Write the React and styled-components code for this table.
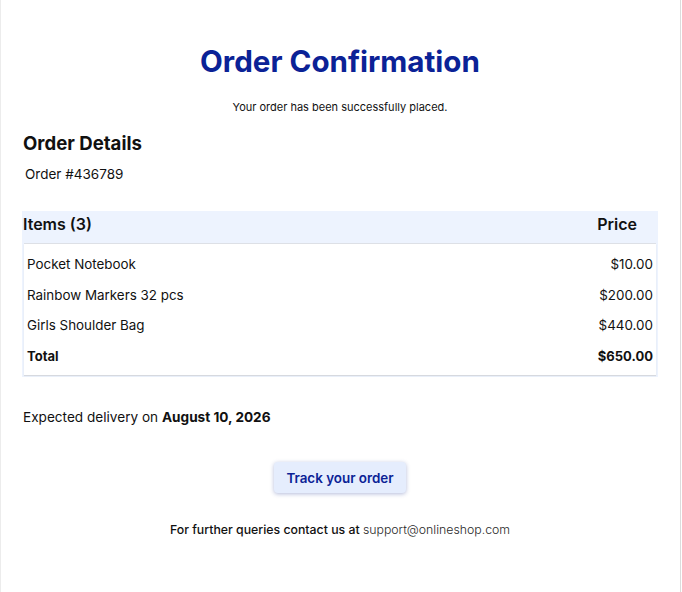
import React from 'react';
import styled, { createGlobalStyle } from 'styled-components';

const GlobalStyle = createGlobalStyle`
    body {
        margin: 0;
        background: #ffffff;
        font-family: "Inter", "Liberation Sans", sans-serif;
        color: #111111;
    }
`;

const Page = styled.div`
    width: 681px;
    min-height: 592px;
    box-sizing: border-box;
    border-left: 1px solid #ececec;
    border-right: 1px solid #dcdcdc;
    padding: 40px 22px 0 21px;
`;

const Title = styled.h1`
    margin: 0;
    text-align: center;
    font-size: 29.6px;
    font-weight: 700;
    color: #0b2296;
    line-height: 42px;
`;

const Subtitle = styled.p`
    margin: 17px 0 0 0;
    text-align: center;
    font-size: 11px;
    line-height: 16px;
`;

const SectionTitle = styled.h2`
    margin: 15px 0 0 1px;
    font-size: 18.6px;
    font-weight: 700;
    line-height: 26px;
`;

const OrderNumber = styled.p`
    margin: 9px 0 0 3px;
    font-size: 13.5px;
    line-height: 18px;
`;

const Table = styled.div`
    margin-top: 28px;
    background: #edf3fe;
    padding: 0 2px 2px 2px;
`;

const HeaderRow = styled.div`
    display: flex;
    justify-content: space-between;
    align-items: flex-start;
    height: 33px;
    box-sizing: border-box;
    padding: 3px 19px 0 0;
    margin-left: -1px;
    font-size: 16px;
    line-height: 20px;
    font-weight: 600;
`;

const Body = styled.div`
    background: #ffffff;
    box-shadow: 0 -1px 0 #dde0e6, 0 1px 1px #d6d9df;
    padding: 5px 3px 4px 3px;
`;

const Row = styled.div`
    display: flex;
    justify-content: space-between;
    align-items: center;
    height: 30.6px;
    font-weight: ${p => (p.$total ? 700 : 400)};
    font-size: ${p => (p.$total ? '13px' : '13.4px')};
`;

const Delivery = styled.p`
    margin: 31px 0 0 1px;
    font-size: 13.6px;
    line-height: 18px;

    strong {
        font-weight: 700;
    }
`;

const ButtonWrap = styled.div`
    display: flex;
    justify-content: center;
    margin-top: 36px;
`;

const TrackButton = styled.button`
    border: none;
    border-radius: 4px;
    background: #e5edfd;
    color: #0b2296;
    font-family: "Inter", "Liberation Sans", sans-serif;
    font-size: 13.4px;
    font-weight: 600;
    padding: 0 12px;
    height: 31px;
    box-shadow: 0 1px 4px rgba(40, 60, 150, 0.35);
    cursor: pointer;
`;

const Footer = styled.p`
    margin: 28px 0 0 0;
    text-align: center;
    font-size: 12.3px;
    line-height: 18px;
    font-weight: 500;

    span {
        font-weight: 300;
        color: #2a2a2a;
    }
`;

const items = [
    { name: 'Pocket Notebook', price: '$10.00' },
    { name: 'Rainbow Markers 32 pcs', price: '$200.00' },
    { name: 'Girls Shoulder Bag', price: '$440.00' },
];

export default function App() {
    return (
        <>
            <GlobalStyle />
            <Page>
                <Title>Order Confirmation</Title>
                <Subtitle>Your order has been successfully placed.</Subtitle>
                <SectionTitle>Order Details</SectionTitle>
                <OrderNumber>Order #436789</OrderNumber>
                <Table>
                    <HeaderRow>
                        <span>Items ({items.length})</span>
                        <span>Price</span>
                    </HeaderRow>
                    <Body>
                        {items.map((item, i) => (
                            <Row key={i}>
                                <span>{item.name}</span>
                                <span>{item.price}</span>
                            </Row>
                        ))}
                        <Row $total>
                            <span>Total</span>
                            <span>$650.00</span>
                        </Row>
                    </Body>
                </Table>
                <Delivery>
                    Expected delivery on <strong>August 10, 2026</strong>
                </Delivery>
                <ButtonWrap>
                    <TrackButton>Track your order</TrackButton>
                </ButtonWrap>
                <Footer>
                    For further queries contact us at <span>support@onlineshop.com</span>
                </Footer>
            </Page>
        </>
    );
}
